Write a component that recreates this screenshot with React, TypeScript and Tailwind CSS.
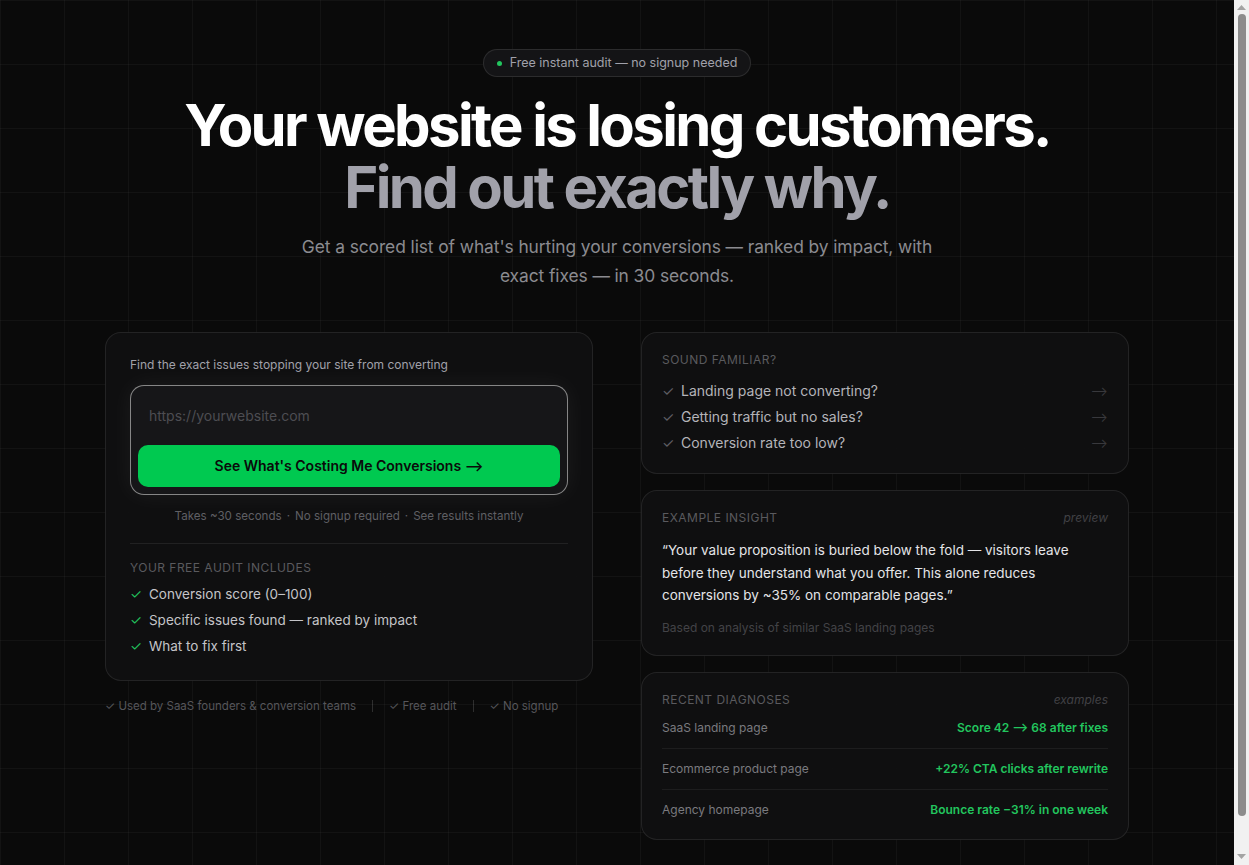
import React from "react";

const familiar = [
  "Landing page not converting?",
  "Getting traffic but no sales?",
  "Conversion rate too low?",
];

const includes = [
  "Conversion score (0–100)",
  "Specific issues found — ranked by impact",
  "What to fix first",
];

const diagnoses = [
  { page: "SaaS landing page", result: "Score 42 ⟶ 68 after fixes" },
  { page: "Ecommerce product page", result: "+22% CTA clicks after rewrite" },
  { page: "Agency homepage", result: "Bounce rate −31% in one week" },
];

const Card: React.FC<{ className?: string; children: React.ReactNode }> = ({
  className = "",
  children,
}) => (
  <div
    className={`rounded-2xl border border-white/[0.09] bg-[#101011]/90 ${className}`}
  >
    {children}
  </div>
);

const Label: React.FC<{ children: React.ReactNode }> = ({ children }) => (
  <p className="text-xs leading-4 uppercase tracking-[0.04em] text-[#5a5a5e]">
    {children}
  </p>
);

// page scrollbar, as the browser draws it
const Scrollbar = () => (
  <aside className="flex w-[15px] shrink-0 flex-col items-center bg-[#f1f1f1] py-[3px]">
    <svg width="9" height="6" viewBox="0 0 9 6" className="mt-[2px]">
      <polygon points="4.5,0 9,5 0,5" fill="#a3a3a3" />
    </svg>
    <div className="mt-[3px] mb-[38px] w-2 flex-1 rounded-full bg-[#8c8c8c]" />
    <svg width="9" height="6" viewBox="0 0 9 6" className="mb-[2px]">
      <polygon points="0,0 9,0 4.5,5" fill="#a3a3a3" />
    </svg>
  </aside>
);

export default function App() {
  return (
    <div
      className="flex h-screen overflow-hidden text-white"
      style={{ fontFamily: "Inter, 'Noto Sans', sans-serif" }}
    >
      <div className="min-w-0 flex-1 bg-[#0a0a0a] bg-[linear-gradient(to_right,rgba(255,255,255,0.035)_1px,transparent_1px),linear-gradient(to_bottom,rgba(255,255,255,0.035)_1px,transparent_1px)] bg-[size:64px_64px]">
        <main className="mx-auto flex max-w-5xl flex-col items-center pt-[49px] pb-10">
          {/* badge */}
          <div className="flex h-7 items-center gap-2 rounded-full border border-white/10 bg-[#141416] px-[13px] text-[12.5px] text-[#a1a1aa]">
            <span className="h-[5px] w-[5px] rounded-full bg-[#22c55e]" />
            Free instant audit — no signup needed
          </div>

          {/* headline */}
          <h1 className="mt-[17px] text-center text-[58px] font-bold leading-[62px] tracking-[-0.045em]">
            <span className="block text-white">Your website is losing customers.</span>
            <span className="block text-[#a1a1aa]">Find out exactly why.</span>
          </h1>

          <p className="mt-[14px] max-w-[645px] text-center text-[17.4px] leading-[29px] tracking-[-0.005em] text-[#8b8b90]">
            Get a scored list of what's hurting your conversions — ranked by
            impact, with exact fixes — in 30 seconds.
          </p>

          {/* columns */}
          <div className="mt-[42px] grid w-full grid-cols-2 gap-12">
            {/* left */}
            <div>
              <Card className="px-6 pt-[22px] pb-[21px]">
                <p className="text-xs leading-5 text-[#a1a1aa]">
                  Find the exact issues stopping your site from converting
                </p>
                <div className="mt-[10px] rounded-[14px] border border-[#a3a3a3]/80 bg-[#161618] p-[7px] shadow-[0_0_24px_rgba(255,255,255,0.06)]">
                  <input
                    className="h-11 w-full bg-transparent px-[11px] text-sm text-white outline-none placeholder:text-[#4d4d52]"
                    placeholder="https://yourwebsite.com"
                  />
                  <button className="mt-2 h-[42px] w-full rounded-[10px] bg-[#00c950] text-sm font-semibold text-[#0a0a0a]">
                    See What's Costing Me Conversions ⟶
                  </button>
                </div>
                <p className="mt-[13px] text-center text-[11.6px] leading-4 text-[#5f5f64]">
                  Takes ~30 seconds
                  <span className="mx-[5px]">·</span>
                  No signup required
                  <span className="mx-[5px]">·</span>
                  See results instantly
                </p>
                <div className="mt-[19px] border-t border-white/[0.08]" />
                <div className="mt-4">
                  <Label>Your free audit includes</Label>
                  <ul className="mt-[5px]">
                    {includes.map((t) => (
                      <li
                        key={t}
                        className="flex items-center gap-[7px] text-[13.5px] leading-[26px] text-[#c4c4c8]"
                      >
                        <span className="text-[#22c55e]">✓</span>
                        {t}
                      </li>
                    ))}
                  </ul>
                </div>
              </Card>
              <div className="mt-[17px] flex items-center text-[11.5px] leading-4 text-[#56565a]">
                <span>✓ Used by SaaS founders &amp; conversion teams</span>
                <span className="mx-4 h-3 w-px bg-white/15" />
                <span>✓ Free audit</span>
                <span className="mx-4 h-3 w-px bg-white/15" />
                <span>✓ No signup</span>
              </div>
            </div>

            {/* right */}
            <div className="flex flex-col gap-4">
              <Card className="px-5 pt-[19px] pb-[17px]">
                <Label>Sound familiar?</Label>
                <ul className="mt-[10px]">
                  {familiar.map((t) => (
                    <li
                      key={t}
                      className="flex items-center text-sm leading-[26px] text-[#b4b4b9]"
                    >
                      <span className="w-[19px] text-[#5e5e63]">✓</span>
                      <span className="flex-1">{t}</span>
                      <span className="text-[13px] text-[#38383c]">⟶</span>
                    </li>
                  ))}
                </ul>
              </Card>

              <Card className="px-5 pt-[19px] pb-[19px]">
                <div className="flex items-center justify-between">
                  <Label>Example insight</Label>
                  <span className="text-xs italic text-[#414145]">preview</span>
                </div>
                <p className="mt-[13px] text-[13.5px] leading-[22.5px] text-[#e4e4e7]">
                  “Your value proposition is buried below the fold — visitors leave
                  before they understand what you offer. This alone reduces
                  conversions by ~35% on comparable pages.”
                </p>
                <p className="mt-[13px] text-xs leading-4 text-[#434347]">
                  Based on analysis of similar SaaS landing pages
                </p>
              </Card>

              <Card className="px-5 pt-[19px] pb-[19px]">
                <div className="flex items-center justify-between">
                  <Label>Recent diagnoses</Label>
                  <span className="text-xs italic text-[#414145]">examples</span>
                </div>
                <div>
                  {diagnoses.map((d, i) => (
                    <div
                      key={d.page}
                      className={`flex items-center justify-between text-xs leading-5 ${
                        i < diagnoses.length - 1
                          ? "border-b border-white/[0.06] py-2.5"
                          : "pt-2.5"
                      }`}
                    >
                      <span className="text-[#7a7a7f]">{d.page}</span>
                      <span className="font-semibold text-[#22c55e]">{d.result}</span>
                    </div>
                  ))}
                </div>
              </Card>
            </div>
          </div>
        </main>
      </div>
      <Scrollbar />
    </div>
  );
}
